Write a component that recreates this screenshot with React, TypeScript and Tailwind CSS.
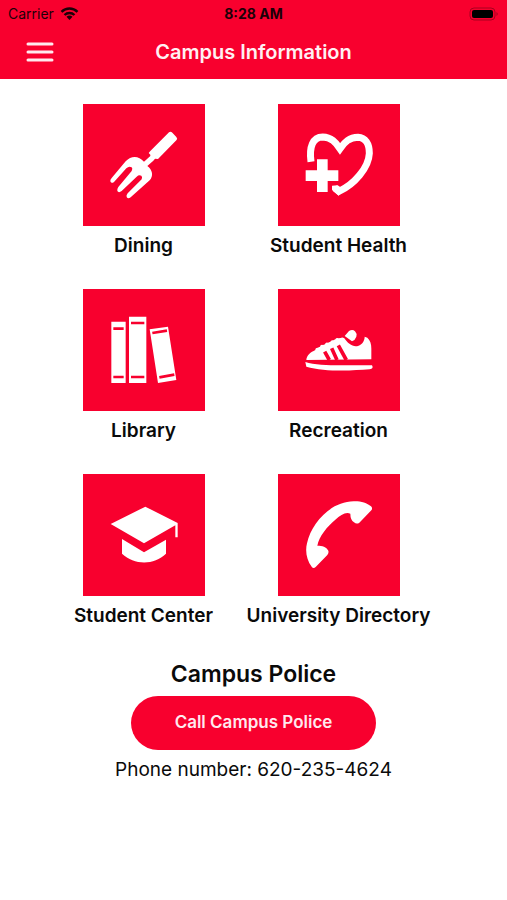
import type { ReactNode } from "react";

const services: { name: string; viewBox: string; icon: ReactNode }[] = [
  {
    name: "Dining",
    viewBox: "-66 -64 366 366",
    icon: (
      <path d="M192 21Q197 17 202 22L214 35Q219 40 214 45L159 101L150 100L145 106L127 122C143 134 146 152 134 165L77 216Q69 222 65 215Q63 210 68 204L110 162Q113 155 109 151Q102 147 95 154L50 197Q41 204 37 197Q35 193 40 185L80 137Q84 130 80 126Q72 121 64 129L27 170Q19 176 16 168Q15 164 20 158L62 108C79 90 101 91 117 109L136 92L136 88L131 83L136 77Z" />
    ),
  },
  {
    name: "Student Health",
    viewBox: "-66 -64 366 366",
    icon: (
      <>
        <path
          d="M33 109C27 66 38 35 68 35C94 36 107 51 120 70C134 50 148 36 174 36C196 37 208 55 208 84C206 128 162 178 117 198L104 188"
          fill="none"
          stroke="currentColor"
          strokeWidth="21"
        />
        <path d="M51 102H83V135H115V167H83V200H51V167H17V135H51Z" />
        <path d="M96 181L113 180L128 190L116 211L96 193Z" />
      </>
    ),
  },
  {
    name: "Library",
    viewBox: "9 11 366 366",
    icon: (
      <>
        <path d="M94 109H137V293H94ZM147 94H199V293H147ZM209 132L264 124L289 284L234 293Z" />
        <path
          className="text-[#f8002e]"
          d="M100 130H131M100 275H131M153 113H193M153 275H193M217 143L261 136M238 276L283 268"
          fill="none"
          stroke="currentColor"
          strokeWidth="8"
        />
      </>
    ),
  },
  {
    name: "Recreation",
    viewBox: "9 11 366 366",
    icon: (
      <>
        <path d="M94 224C95 209 107 201 121 194Q120 188 128 187L135 184Q136 177 144 179L150 177Q151 170 159 172L166 169Q168 163 175 165L181 162Q184 156 191 159L197 158Q202 154 208 159C218 174 234 187 249 182C264 177 269 163 269 154L277 157C286 165 289 176 289 190V222Z" />
        <path d="M209 152L222 137Q233 131 240 138Q247 145 244 154Q240 165 231 168Z" />
        <path d="M91 230C117 239 157 240 197 240H291Q297 250 284 252C223 257 146 259 94 244Z" />
        <path
          className="text-[#f8002e]"
          d="M149 199L163 224M170 189L186 224M190 180L214 224"
          fill="none"
          stroke="currentColor"
          strokeWidth="11"
        />
      </>
    ),
  },
  {
    name: "Student Center",
    viewBox: "39 11 366 366",
    icon: (
      <>
        <path d="M226 109L323 158V201H316V165L222 219L122 161Z" />
        <path d="M156 206L222 246L288 208V250C252 285 193 285 156 250Z" />
      </>
    ),
  },
  {
    name: "University Directory",
    viewBox: "99 11 366 366",
    icon: (
      <path d="M212 290Q205 296 200 289C185 270 180 242 186 219C200 156 258 94 326 93C346 92 366 98 378 108Q384 114 379 120L343 157Q335 163 327 156Q316 149 316 130C302 124 287 134 271 148C246 169 222 198 217 226C232 226 244 229 250 241Q252 248 247 254Z" />
    ),
  },
];

const slugify = (text: string) => text.toLowerCase().replace(/\s+/g, "-");

function StatusBar() {
  return (
    <div className="grid grid-cols-3 items-center h-7 px-2 text-[#1c0008]">
      <div className="flex items-center gap-1.5 text-sm">
        Carrier
        <svg className="w-[19px] h-[14px]" viewBox="0 0 18 14" fill="none" aria-hidden="true">
          <path
            d="M1 4.8C5.5.4 12.5.4 17 4.8M4 8C6.8 5.3 11.2 5.3 14 8"
            stroke="currentColor"
            strokeWidth="2.4"
          />
          <path d="M6 9.7Q9 7.4 12 9.7L9 13Z" fill="currentColor" />
        </svg>
      </div>
      <div className="text-center text-sm font-bold">8:28 AM</div>
      <svg className="w-[30px] h-[14px] justify-self-end" viewBox="0 0 30 14" aria-hidden="true">
        <rect x="1" y="1" width="25" height="12" rx="4" fill="none" stroke="#a8001f" />
        <rect x="3" y="3" width="21" height="8" rx="2" fill="#000" />
        <path d="M27.5 5Q30 7 27.5 9Z" fill="#a8001f" />
      </svg>
    </div>
  );
}

export default function App() {
  return (
    <div className="min-h-screen bg-white font-[Inter,sans-serif] text-[#0a0a0a]">
      <header className="bg-[#f8002e]">
        <StatusBar />
        <div className="grid grid-cols-[1fr_auto_1fr] items-center px-6 pb-1 h-[51px]">
          <button aria-label="Open menu" className="w-8 h-8 text-[#ffe9ee]">
            <svg className="w-8 h-8" viewBox="0 0 32 32" aria-hidden="true">
              <path
                d="M4 8H28M4 16H28M4 24H28"
                stroke="currentColor"
                strokeWidth="3"
                strokeLinecap="round"
              />
            </svg>
          </button>
          <h1 className="text-xl font-semibold text-[#fff0f3]">Campus Information</h1>
        </div>
      </header>

      <main className="pt-[25px] pb-8">
        <nav className="grid grid-cols-2 gap-y-7 pl-[46px] pr-[71px]">
          {services.map((service) => (
            <a
              key={service.name}
              href={`#${slugify(service.name)}`}
              className="flex flex-col items-center gap-1"
            >
              <svg
                className="w-[122px] h-[122px] bg-[#f8002e] text-white"
                viewBox={service.viewBox}
                fill="currentColor"
                aria-hidden="true"
              >
                {service.icon}
              </svg>
              <span className="text-[19px] leading-[31px] font-semibold whitespace-nowrap">
                {service.name}
              </span>
            </a>
          ))}
        </nav>

        <section className="flex flex-col items-center mt-[27px]">
          <h2 className="text-[23px] leading-8 font-semibold">Campus Police</h2>
          <button className="w-[245px] h-[54px] mt-1.5 rounded-full bg-[#f8002e] text-[17px] font-semibold text-[#ffe9ee]">
            Call Campus Police
          </button>
          <p className="mt-1 text-[19px] leading-[31px]">Phone number: 620-235-4624</p>
        </section>
      </main>
    </div>
  );
}
